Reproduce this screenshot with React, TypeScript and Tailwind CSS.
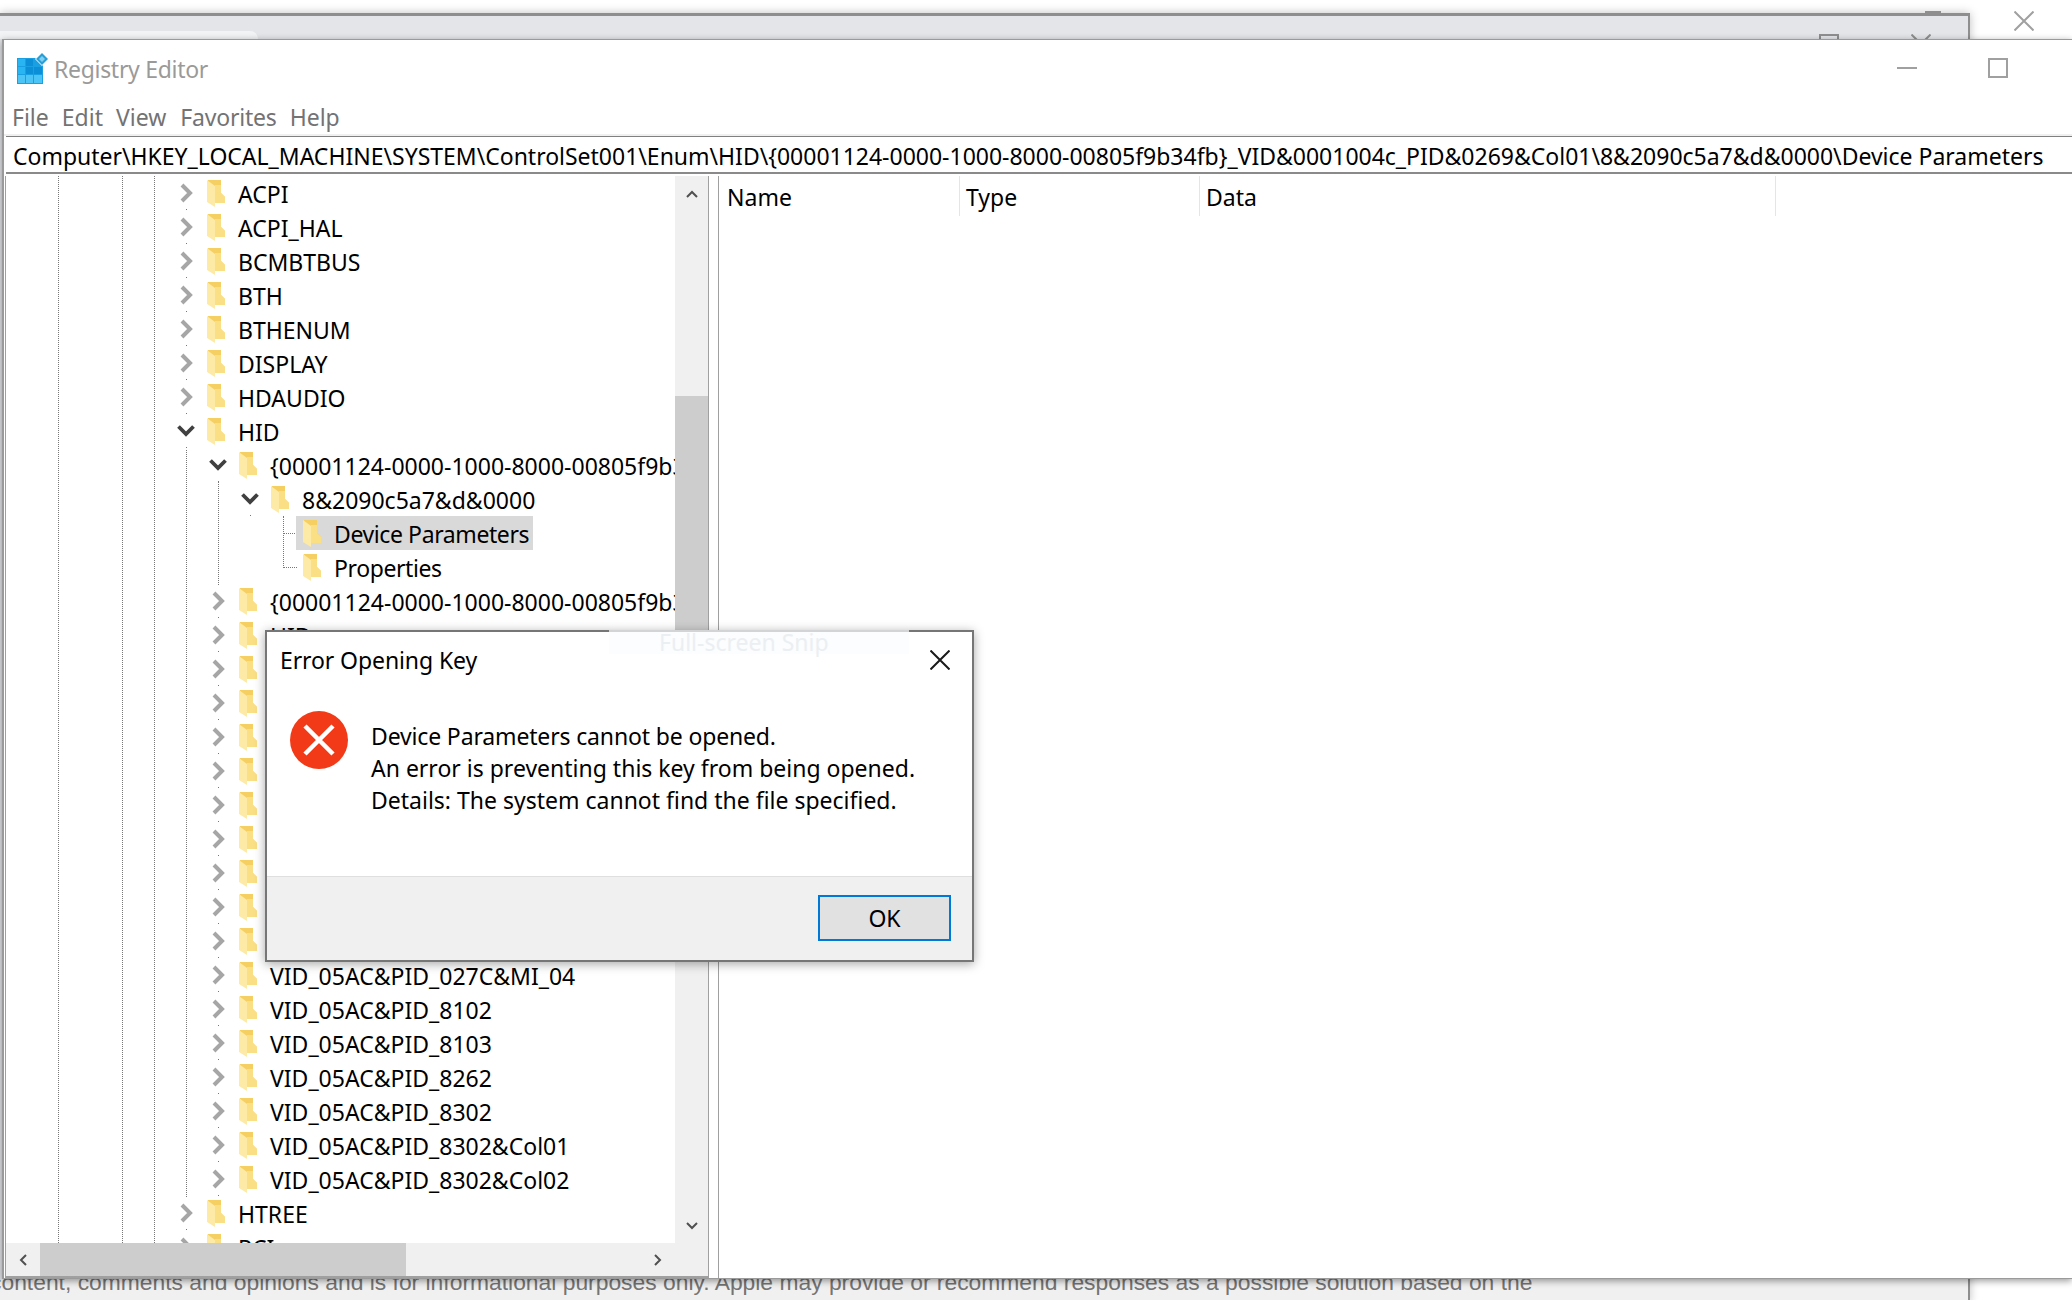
const ADDRESS =
  "Computer\\HKEY_LOCAL_MACHINE\\SYSTEM\\ControlSet001\\Enum\\HID\\{00001124-0000-1000-8000-00805f9b34fb}_VID&0001004c_PID&0269&Col01\\8&2090c5a7&d&0000\\Device Parameters"

const GUID = "{00001124-0000-1000-8000-00805f9b34fb}_VID&0001004c_PID&0269"

type Node = { label: string; level: 0 | 1 | 2 | 3; open?: boolean; selected?: boolean }

const nodes: Node[] = [
  { label: "ACPI", level: 0 },
  { label: "ACPI_HAL", level: 0 },
  { label: "BCMBTBUS", level: 0 },
  { label: "BTH", level: 0 },
  { label: "BTHENUM", level: 0 },
  { label: "DISPLAY", level: 0 },
  { label: "HDAUDIO", level: 0 },
  { label: "HID", level: 0, open: true },
  { label: GUID, level: 1, open: true },
  { label: "8&2090c5a7&d&0000", level: 2, open: true },
  { label: "Device Parameters", level: 3, selected: true },
  { label: "Properties", level: 3 },
  { label: GUID, level: 1 },
  { label: "HID", level: 1 },
  { label: "", level: 1 },
  { label: "", level: 1 },
  { label: "", level: 1 },
  { label: "", level: 1 },
  { label: "", level: 1 },
  { label: "", level: 1 },
  { label: "", level: 1 },
  { label: "", level: 1 },
  { label: "", level: 1 },
  { label: "VID_05AC&PID_027C&MI_04", level: 1 },
  { label: "VID_05AC&PID_8102", level: 1 },
  { label: "VID_05AC&PID_8103", level: 1 },
  { label: "VID_05AC&PID_8262", level: 1 },
  { label: "VID_05AC&PID_8302", level: 1 },
  { label: "VID_05AC&PID_8302&Col01", level: 1 },
  { label: "VID_05AC&PID_8302&Col02", level: 1 },
  { label: "HTREE", level: 0 },
  { label: "PCI", level: 0 },
]

const indent = {
  0: "pl-[170px]",
  1: "pl-[202px]",
  2: "pl-[234px]",
  3: "pl-[266px]",
}

const Folder = () => (
  <svg width="18" height="27" viewBox="0 0 18 27" className="shrink-0">
    <polygon points="1,0 14,0 14,13 18,17 18,23 6,23 1,20" fill="#f5cf62" />
    <polygon points="8,5 14,5 14,13 18,17 18,23 8,23" fill="#fadf85" />
    <polygon points="0,0 8,6 8,27 0,22" fill="#fdeaa6" />
  </svg>
)

const TreeChevron = ({ open }: { open?: boolean }) => (
  <span className="relative flex h-full w-[20px] shrink-0 items-center justify-center">
    {open ? (
      <svg width="18" height="12" viewBox="0 0 18 12">
        <polyline points="1.5,1.5 9,9 16.5,1.5" fill="none" stroke="#404040" strokeWidth="3.8" />
      </svg>
    ) : (
      <svg width="13" height="20" viewBox="0 0 13 20">
        <polyline points="2,2 10,10 2,18" fill="none" stroke="#a6a6a6" strokeWidth="4" />
      </svg>
    )}
    <span className="absolute bottom-0 left-[10px] h-px w-px bg-[#777777]" />
  </span>
)

const Row = ({ node }: { node: Node }) => (
  <div className={`flex h-[34px] items-center whitespace-nowrap ${indent[node.level]}`}>
    {node.level < 3 ? <TreeChevron open={node.open} /> : <span className="h-full w-[20px] shrink-0" />}
    <div
      className={`ml-[4px] flex h-full items-center pl-[7px] pr-[4px] ${node.selected ? "bg-[#d9d9d9]" : ""}`}
    >
      <Folder />
      <span className={`ml-[13px] pt-[2px] text-black ${node.level === 3 ? "tracking-[-0.4px]" : ""}`}>
        {node.label}
      </span>
    </div>
  </div>
)

const SmallChevron = ({ points }: { points: string }) => (
  <svg width="14" height="14" viewBox="0 0 14 14">
    <polyline points={points} fill="none" stroke="#505050" strokeWidth="2" />
  </svg>
)

const RegistryIcon = () => (
  <svg width="32" height="33" viewBox="0 0 32 33" className="shrink-0">
    <rect x="0" y="6" width="26" height="26" fill="#1b9fe3" />
    <rect x="1" y="7" width="7" height="7" fill="#29b4f2" />
    <rect x="9" y="7" width="7" height="7" fill="#0d8fd8" />
    <rect x="1" y="15" width="7" height="7" fill="#29b4f2" />
    <rect x="9" y="15" width="7" height="7" fill="#0d8fd8" />
    <rect x="17" y="15" width="8" height="7" fill="#0d8fd8" />
    <rect x="1" y="23" width="7" height="8" fill="#4cc4f5" />
    <rect x="9" y="23" width="7" height="8" fill="#4cc4f5" />
    <rect x="17" y="23" width="8" height="8" fill="#4cc4f5" />
    <polygon points="25,0 32,7 25,14 18,7" fill="#ffffff" />
    <polygon points="25,1 31,7 25,13 19,7" fill="#2a9fd6" />
    <polygon points="25,4 28,7 25,10 22,7" fill="#7fd0f2" />
  </svg>
)

const ErrorIcon = () => (
  <svg width="58" height="58" viewBox="0 0 58 58" className="shrink-0">
    <circle cx="29" cy="29" r="29" fill="#f23a18" />
    <path d="M15 15 L43 43 M43 15 L15 43" stroke="#ffffff" strokeWidth="4.5" fill="none" />
  </svg>
)

const CloseGlyph = ({ size, color, width }: { size: number; color: string; width: number }) => (
  <svg width={size} height={size} viewBox="0 0 20 20" className="block">
    <path d="M0.5 0.5 L19.5 19.5 M19.5 0.5 L0.5 19.5" stroke={color} strokeWidth={width} fill="none" />
  </svg>
)

const BackWindow = () => (
  <>
    <div className="absolute left-0 top-[13px] h-[1290px] w-[1970px] border-r-2 border-t-[3px] border-[#8e8e8e] bg-[#e3e5e8] shadow-[0_0_9px_rgba(0,0,0,0.25)]" />
    <div className="absolute left-0 top-[31px] h-[8px] w-[258px] rounded-tr-[10px] bg-[#f2f3f4]" />
    <div className="absolute left-[1925px] top-[11px] h-[2px] w-[16px] bg-[#8e8e8e]" />
    <div className="absolute left-[1819px] top-[34px] h-[20px] w-[20px] border-2 border-[#8e8e8e]" />
    <div className="absolute left-[1911px] top-[34px]">
      <CloseGlyph size={20} color="#8e8e8e" width={2} />
    </div>
    <div className="absolute left-[2014px] top-[11px]">
      <CloseGlyph size={20} color="#a0a0a0" width={2} />
    </div>
    <div className="absolute left-0 top-[1279px] h-[21px] w-[1968px] overflow-hidden bg-[#f0f0f0]">
      <p className="-ml-[10px] -mt-[10px] whitespace-nowrap font-['Liberation_Sans',sans-serif] text-[22.85px] leading-[26px] text-[#747474]">
        content, comments and opinions and is for informational purposes only. Apple may provide or recommend
        responses as a possible solution based on the
      </p>
    </div>
  </>
)

const Dialog = () => (
  <div className="absolute left-[265px] top-[630px] flex h-[332px] w-[709px] flex-col border-2 border-[#767676] bg-white shadow-[0_2px_10px_rgba(0,0,0,0.35)]">
    <div className="flex h-[59px] items-start justify-between pl-[13px] pr-[22px] pt-[11px]">
      <span className="tracking-[-0.1px] text-black">Error Opening Key</span>
      <div className="mt-[7px]">
        <CloseGlyph size={20} color="#1a1a1a" width={2} />
      </div>
    </div>
    <div className="flex flex-1 items-start pl-[23px] pt-[20px]">
      <ErrorIcon />
      <div className="ml-[23px] mt-[9px] leading-[32px] text-black">
        <p className="tracking-[-0.15px]">Device Parameters cannot be opened.</p>
        <p>An error is preventing this key from being opened.</p>
        <p>Details: The system cannot find the file specified.</p>
      </div>
    </div>
    <div className="flex h-[84px] justify-end border-t border-[#dfdfdf] bg-[#f0f0f0] pr-[21px] pt-[18px]">
      <button className="h-[46px] w-[133px] border-2 border-[#0078d7] bg-[#e1e1e1] text-black">OK</button>
    </div>
    {/* leftover snip toolbar ghost */}
    <div className="absolute left-[342px] top-[-2px] flex h-[24px] w-[300px] items-center bg-[#fafcfe]/70 pl-[50px] text-[#eceff2]">
      Full-screen Snip
    </div>
  </div>
)

export default function App() {
  return (
    <div className="relative h-[1300px] w-[2072px] overflow-hidden bg-white font-['Noto_Sans',sans-serif] text-[23px]">
      <BackWindow />

      <div className="absolute left-[2px] right-0 top-[39px] flex h-[1240px] flex-col border-b border-l-2 border-t border-[#9a9a9a] bg-white shadow-[0_2px_7px_rgba(0,0,0,0.4)]">
        <div className="flex h-[57px] items-start pl-[13px] pt-[12px]">
          <RegistryIcon />
          <span className="ml-[5px] tracking-[-0.3px] text-[#9a9a9a]">Registry Editor</span>
          <div className="ml-auto mt-[15px] h-[2px] w-[20px] bg-[#a0a0a0]" />
          <div className="ml-[71px] mr-[64px] mt-[6px] h-[20px] w-[20px] border-2 border-[#a0a0a0]" />
        </div>

        <div className="flex h-[37px] items-center gap-[13px] pl-[8px] pt-[3px] text-[#737373]">
          <span>File</span>
          <span>Edit</span>
          <span>View</span>
          <span className="ml-[1px] tracking-[-0.2px]">Favorites</span>
          <span>Help</span>
        </div>

        <div className="h-[2px] bg-[#f0f0f0]" />
        <div className="ml-[2px] flex h-[38px] items-center whitespace-nowrap border-b-2 border-t border-b-[#8a8a8a] border-t-[#808080] pl-[7px] pt-[3px] tracking-[-0.01px] text-black">
          {ADDRESS}
        </div>

        <div className="ml-[1px] mt-[2px] flex min-h-0 flex-1">
          <div className="flex w-[704px] flex-col border-b-2 border-l border-r border-[#a0a0a0]">
            <div className="flex min-h-0 flex-1">
              <div className="relative min-w-0 flex-1 overflow-hidden bg-white">
                {/* tree guide lines */}
                <div className="absolute bottom-0 left-[52px] top-0 border-l border-dotted border-[#777777]" />
                <div className="absolute bottom-0 left-[116px] top-0 border-l border-dotted border-[#777777]" />
                <div className="absolute bottom-0 left-[148px] top-0 border-l border-dotted border-[#777777]" />
                <div className="absolute left-[180px] top-[274px] h-[747px] border-l border-dotted border-[#777777]" />
                <div className="absolute left-[212px] top-[306px] h-[103px] border-l border-dotted border-[#777777]" />
                <div className="absolute left-[277px] top-[340px] h-[52px] border-l border-dotted border-[#777777]" />
                <div className="absolute left-[277px] top-[357px] w-[14px] border-t border-dotted border-[#777777]" />
                <div className="absolute left-[277px] top-[391px] w-[14px] border-t border-dotted border-[#777777]" />
                <div className="relative">
                  {nodes.map((node, i) => (
                    <Row key={i} node={node} />
                  ))}
                </div>
              </div>
              <div className="flex w-[33px] shrink-0 flex-col bg-[#f0f0f0]">
                <div className="flex h-[36px] items-center justify-center">
                  <SmallChevron points="2,10 7,5 12,10" />
                </div>
                <div className="h-[184px]" />
                <div className="h-[404px] bg-[#cdcdcd]" />
                <div className="flex-1" />
                <div className="flex h-[34px] items-center justify-center">
                  <SmallChevron points="2,4 7,9 12,4" />
                </div>
              </div>
            </div>
            <div className="flex h-[33px] shrink-0 bg-[#f0f0f0]">
              <div className="flex w-[34px] items-center justify-center">
                <SmallChevron points="10,2 5,7 10,12" />
              </div>
              <div className="w-[366px] bg-[#cdcdcd]" />
              <div className="flex-1" />
              <div className="mr-[33px] flex w-[35px] items-center justify-center">
                <SmallChevron points="4,2 9,7 4,12" />
              </div>
            </div>
          </div>

          <div className="ml-[9px] flex-1 border-l border-[#a0a0a0]">
            <div className="flex h-[40px] text-black">
              <div className="w-[241px] border-r border-[#e5e5e5] pl-[8px] leading-[42px]">Name</div>
              <div className="w-[240px] border-r border-[#e5e5e5] pl-[6px] leading-[42px]">Type</div>
              <div className="w-[576px] border-r border-[#e5e5e5] pl-[6px] leading-[42px]">Data</div>
            </div>
          </div>
        </div>
      </div>

      <Dialog />
    </div>
  )
}
